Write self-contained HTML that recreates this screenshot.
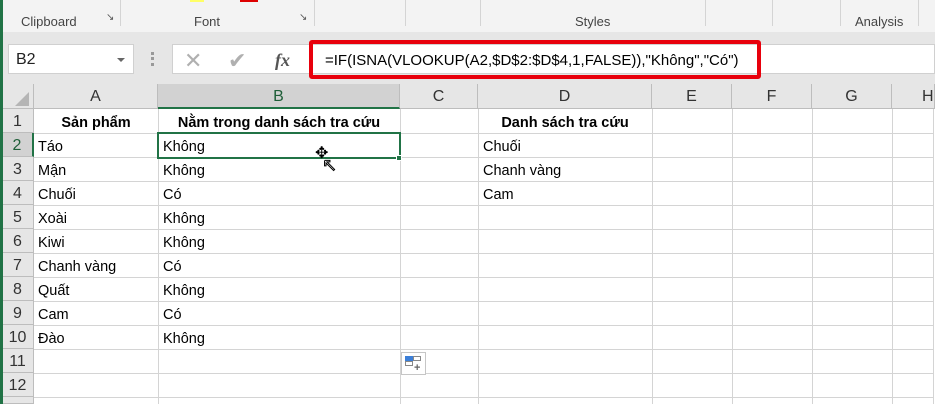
<!DOCTYPE html><html><head><meta charset="utf-8"><style>
html,body{margin:0;width:935px;height:404px;overflow:hidden}
body{background:#fff;position:relative;font-family:"Liberation Sans",sans-serif}
div{position:absolute;box-sizing:border-box}
.rib{left:0;top:0;width:935px;height:32px;background:#f3f3f3}
.sep{top:0;width:1px;height:26px;background:#d4d4d4}
.gl{top:14px;font-size:13px;color:#444}
.fb{left:0;top:32px;width:935px;height:52px;background:#e6e6e6}
.hdr{top:84px;height:25px;background:#e6e6e6;border-right:1px solid #bdbdbd;border-bottom:1px solid #bdbdbd;text-align:center;font-size:16px;color:#333;line-height:26px}
.rh{left:2px;width:32px;height:24px;background:#e6e6e6;border-bottom:1px solid #bdbdbd;border-right:1px solid #bdbdbd;text-align:center;font-size:16px;color:#333;line-height:26px}
.c{height:24px;font-size:14.5px;line-height:27px;color:#000;padding-left:5px;white-space:nowrap}
.vl{top:109px;width:1px;height:295px;background:#d4d4d4}
.hl{left:34px;width:899px;height:1px;background:#d4d4d4}
</style></head><body>
<div class="rib"></div>
<div class="sep" style="left:120px"></div><div class="sep" style="left:314px"></div><div class="sep" style="left:405px"></div><div class="sep" style="left:480px"></div><div class="sep" style="left:705px"></div><div class="sep" style="left:772px"></div><div class="sep" style="left:840px"></div><div class="sep" style="left:918px"></div>
<div class="gl" style="left:21px">Clipboard</div>
<div class="gl" style="left:106px;top:12px;font-size:10px;color:#555">&#x2198;</div>
<div class="gl" style="left:194px">Font</div>
<div class="gl" style="left:299px;top:12px;font-size:10px;color:#555">&#x2198;</div>
<div class="gl" style="left:575px">Styles</div>
<div class="gl" style="left:855px">Analysis</div>
<div style="left:190px;top:0;width:14px;height:2px;background:#ffff66"></div>
<div style="left:240px;top:0;width:18px;height:2px;background:#d00"></div>
<div class="fb"></div>
<div style="left:8px;top:44px;width:126px;height:30px;background:#fff;border:1px solid #d0d0d0;font-size:16px;line-height:30px;padding-left:7px;color:#222">B2</div>
<div style="left:117px;top:58px;width:0;height:0;border-left:4px solid transparent;border-right:4px solid transparent;border-top:4px solid #666"></div>
<div style="left:151px;top:52px;width:3px;height:14px;border-left:3px dotted #999"></div>
<div style="left:172px;top:44px;width:763px;height:30px;background:#fff;border:1px solid #d0d0d0"></div>
<div style="left:184px;top:48px;font-size:22px;color:#b0b0b0">&#x2715;</div>
<div style="left:228px;top:48px;font-size:22px;color:#b0b0b0">&#x2714;</div>
<div style="left:275px;top:50px;font-size:18px;font-style:italic;font-family:'Liberation Serif',serif;color:#555;font-weight:bold">fx</div>
<div style="left:309px;top:40px;width:452px;height:39px;border:4px solid #e8000c;border-radius:3px"></div>
<div style="left:325px;top:52px;font-size:15px;color:#000">=IF(ISNA(VLOOKUP(A2,$D$2:$D$4,1,FALSE)),"Không","Có")</div>
<div class="hdr" style="left:2px;width:32px"></div>
<div style="left:15px;top:92px;width:0;height:0;border-left:14px solid transparent;border-bottom:14px solid #b5b5b5"></div>
<div class="hdr" style="left:34px;width:124px">A</div>
<div class="hdr" style="left:158px;width:242px;background:#d2d2d2;color:#1e5e38;border-bottom:2px solid #217346">B</div>
<div class="hdr" style="left:400px;width:78px">C</div>
<div class="hdr" style="left:478px;width:174px">D</div>
<div class="hdr" style="left:652px;width:80px">E</div>
<div class="hdr" style="left:732px;width:80px">F</div>
<div class="hdr" style="left:812px;width:80px">G</div>
<div class="hdr" style="left:892px;width:43px;text-align:left;padding-left:30px">H</div>
<div class="vl" style="left:158px"></div><div class="vl" style="left:400px"></div><div class="vl" style="left:478px"></div><div class="vl" style="left:652px"></div><div class="vl" style="left:732px"></div><div class="vl" style="left:812px"></div><div class="vl" style="left:892px"></div><div class="vl" style="left:933px"></div>
<div class="hl" style="top:133px"></div><div class="hl" style="top:157px"></div><div class="hl" style="top:181px"></div><div class="hl" style="top:205px"></div><div class="hl" style="top:229px"></div><div class="hl" style="top:253px"></div><div class="hl" style="top:277px"></div><div class="hl" style="top:301px"></div><div class="hl" style="top:325px"></div><div class="hl" style="top:349px"></div><div class="hl" style="top:373px"></div><div class="hl" style="top:397px"></div>
<div class="rh" style="top:109px">1</div>
<div class="rh" style="top:133px;background:#d2d2d2;border-right:2px solid #217346;color:#1e5e38">2</div>
<div class="rh" style="top:157px">3</div><div class="rh" style="top:181px">4</div><div class="rh" style="top:205px">5</div><div class="rh" style="top:229px">6</div><div class="rh" style="top:253px">7</div><div class="rh" style="top:277px">8</div><div class="rh" style="top:301px">9</div><div class="rh" style="top:325px">10</div><div class="rh" style="top:349px">11</div><div class="rh" style="top:373px">12</div><div class="rh" style="top:397px;height:7px"></div>
<div style="left:0;top:0;width:3px;height:404px;background:#217346"></div>
<div class="c" style="left:34px;top:110px;width:124px;text-align:center;font-weight:bold;padding:0">Sản phẩm</div>
<div class="c" style="left:158px;top:110px;width:242px;text-align:center;font-weight:bold;padding:0">Nằm trong danh sách tra cứu</div>
<div class="c" style="left:478px;top:110px;width:174px;text-align:center;font-weight:bold;padding:0">Danh sách tra cứu</div>
<div class="c" style="left:33px;top:134px">Táo</div><div class="c" style="left:158px;top:134px">Không</div><div class="c" style="left:478px;top:134px">Chuối</div>
<div class="c" style="left:33px;top:158px">Mận</div><div class="c" style="left:158px;top:158px">Không</div><div class="c" style="left:478px;top:158px">Chanh vàng</div>
<div class="c" style="left:33px;top:182px">Chuối</div><div class="c" style="left:158px;top:182px">Có</div><div class="c" style="left:478px;top:182px">Cam</div>
<div class="c" style="left:33px;top:206px">Xoài</div><div class="c" style="left:158px;top:206px">Không</div>
<div class="c" style="left:33px;top:230px">Kiwi</div><div class="c" style="left:158px;top:230px">Không</div>
<div class="c" style="left:33px;top:254px">Chanh vàng</div><div class="c" style="left:158px;top:254px">Có</div>
<div class="c" style="left:33px;top:278px">Quất</div><div class="c" style="left:158px;top:278px">Không</div>
<div class="c" style="left:33px;top:302px">Cam</div><div class="c" style="left:158px;top:302px">Có</div>
<div class="c" style="left:33px;top:326px">Đào</div><div class="c" style="left:158px;top:326px">Không</div>
<div style="left:157px;top:132px;width:244px;height:27px;border:2px solid #217346"></div>
<div style="left:396px;top:155px;width:6px;height:6px;background:#217346;border:1px solid #fff"></div>
<div style="left:315px;top:146px;font-size:16px;color:#000;line-height:16px">&#x2725;</div>
<div style="left:322px;top:156px;font-size:18px;color:#fff;-webkit-text-stroke:1px #000;line-height:18px">&#x2196;</div>
<div style="left:401px;top:352px;width:25px;height:23px;border:1px solid #c6c6c6;background:#fff"></div>
<div style="left:405px;top:356px;width:8px;height:5px;background:#3c7fd8"></div>
<div style="left:413px;top:356px;width:8px;height:5px;border:1px solid #888"></div>
<div style="left:405px;top:361px;width:8px;height:5px;border:1px solid #888"></div>
<div style="left:414px;top:362px;font-size:11px;color:#666;font-weight:bold">+</div>
</body></html>
